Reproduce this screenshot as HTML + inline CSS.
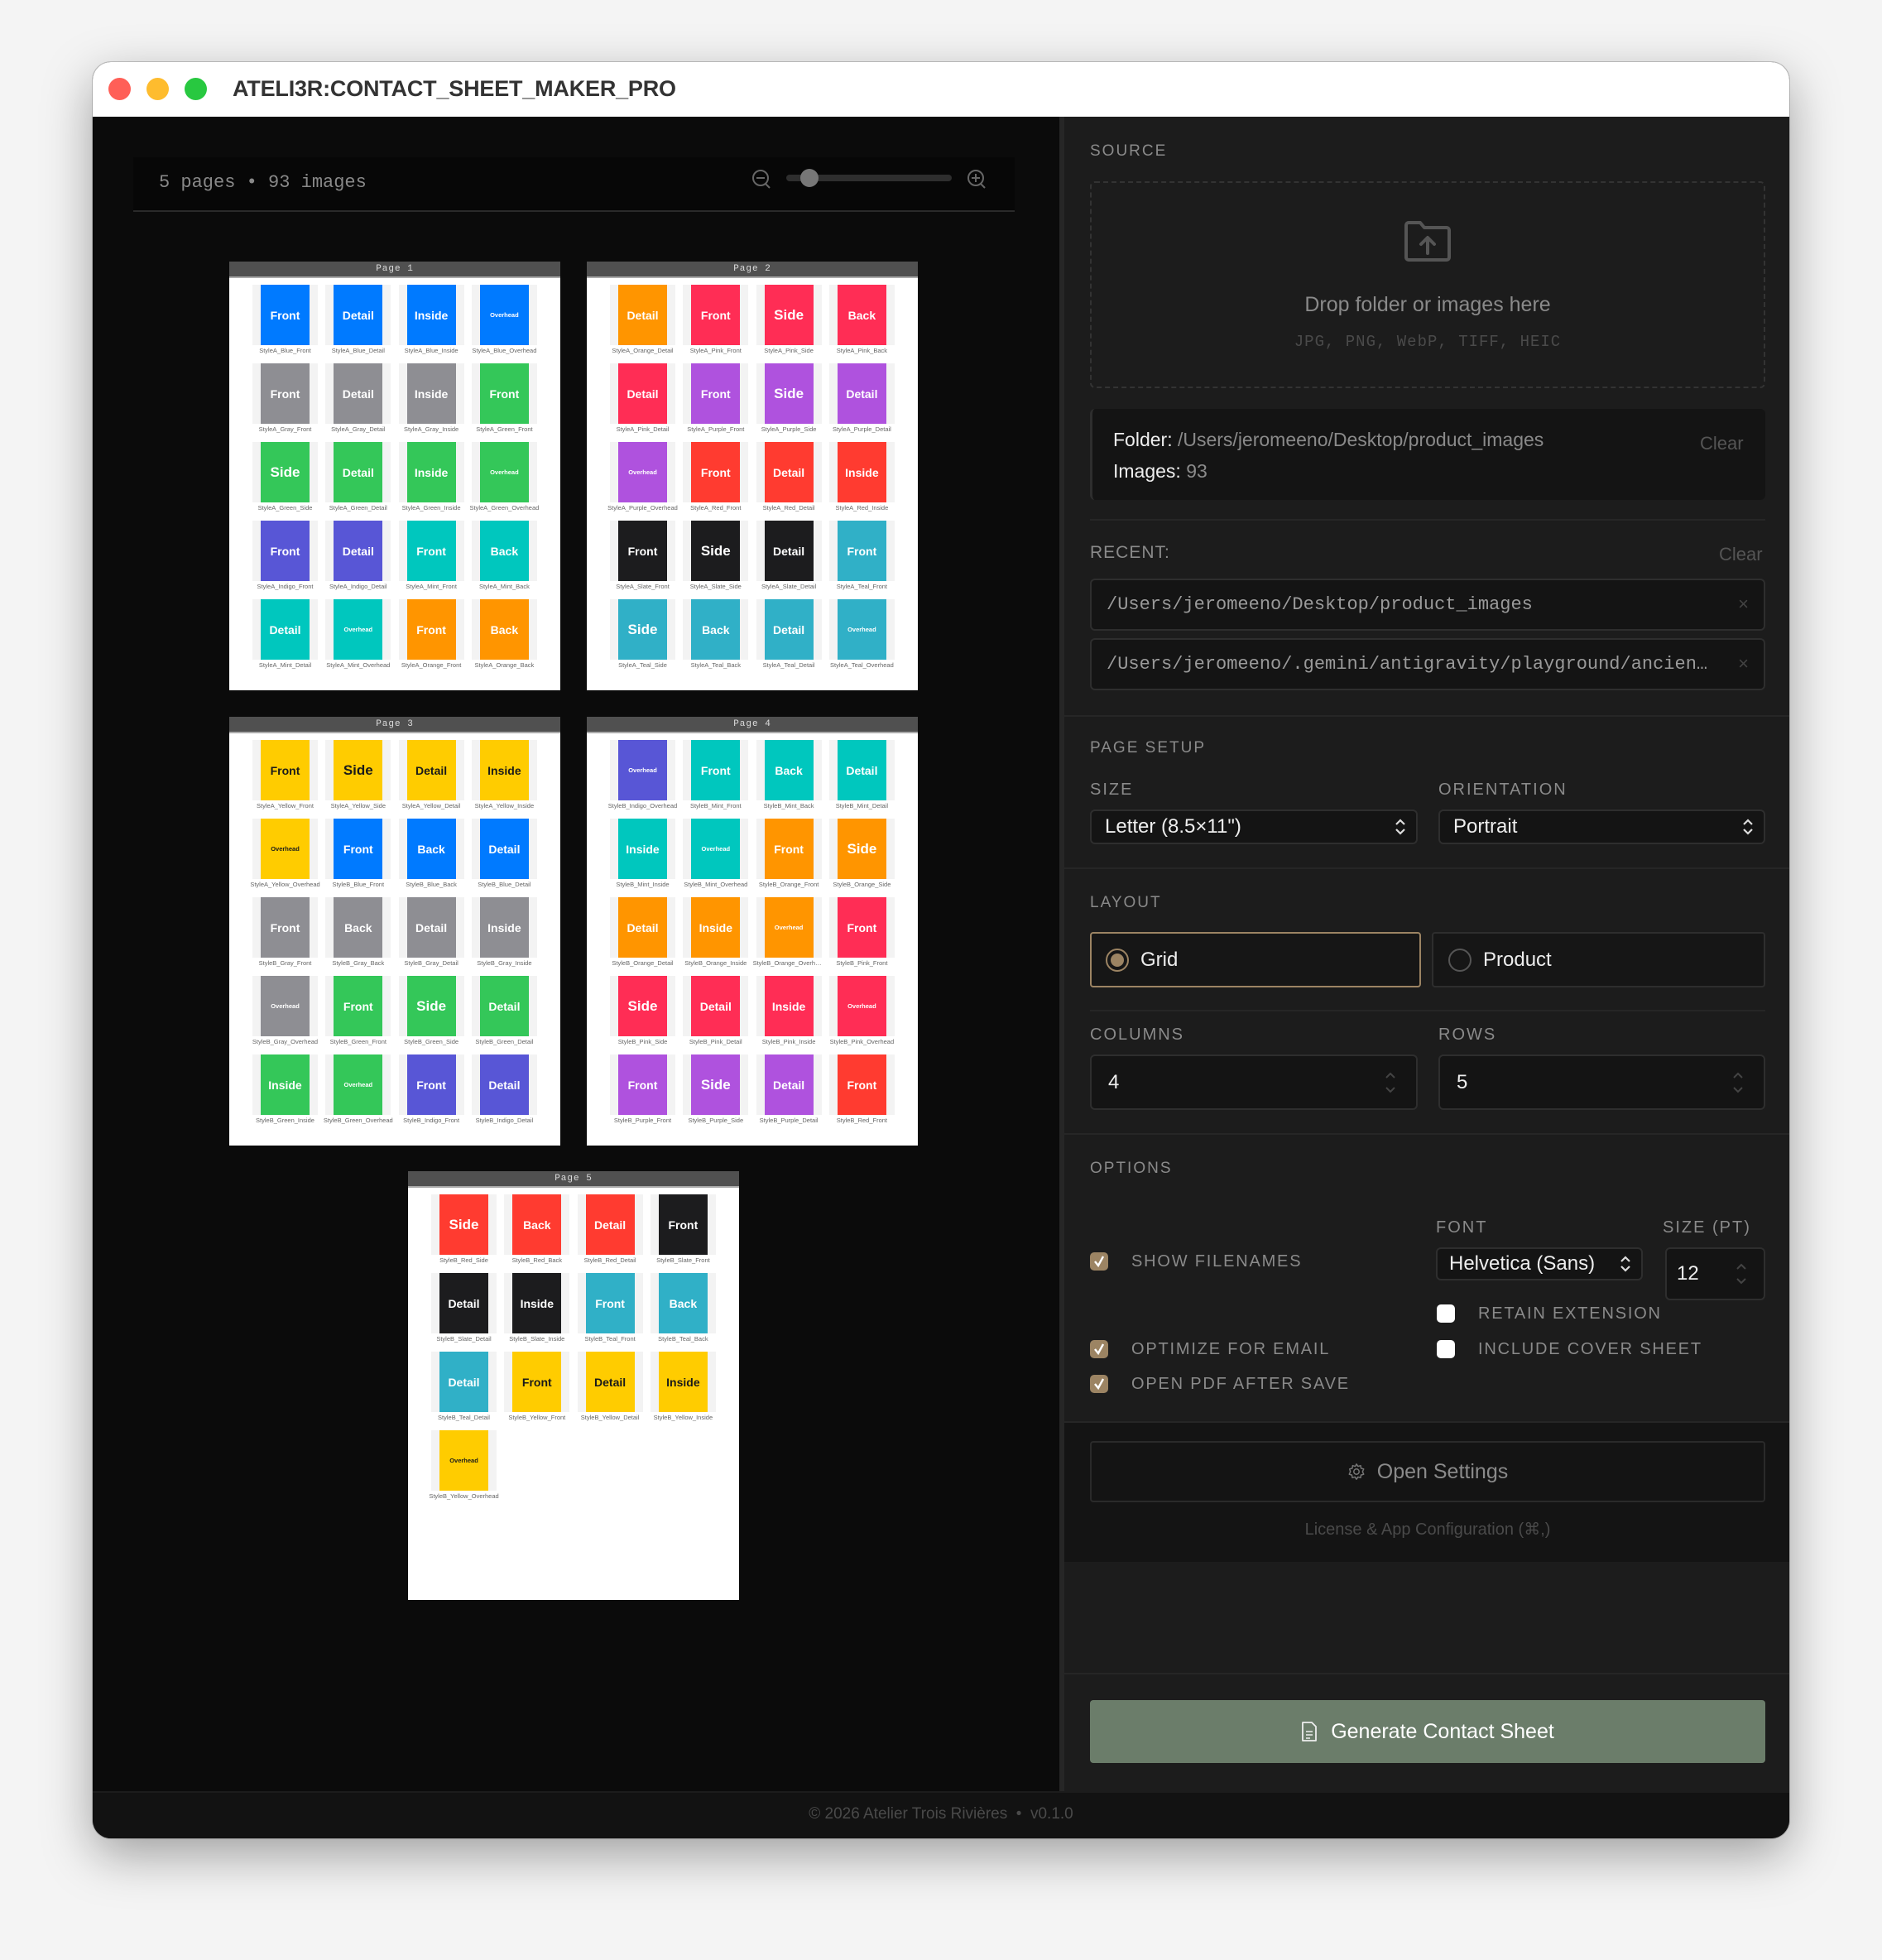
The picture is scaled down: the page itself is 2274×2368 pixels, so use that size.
<!DOCTYPE html>
<html><head><meta charset="utf-8"><style>
*{box-sizing:border-box;margin:0;padding:0}
html,body{width:2274px;height:2368px;overflow:hidden;background:#f4f4f4;font-family:"Liberation Sans",Arial,sans-serif}
.win{position:absolute;left:112px;top:75px;width:2050px;height:2146px;border-radius:22px;overflow:hidden;background:#0b0b0b;box-shadow:0 20px 60px rgba(0,0,0,.35),0 0 0 1px #c8c8c8}
.tb{position:absolute;left:0;top:0;width:100%;height:66px;background:#fff}
.dot{position:absolute;top:19px;width:27px;height:27px;border-radius:50%}
.ttl{position:absolute;left:169px;top:17px;font-weight:bold;font-size:27px;color:#333;letter-spacing:-.2px}
.abs{position:absolute}
.page{position:absolute;width:400px;height:518px;background:#fff}
.ph{height:20px;background:#505050;border-bottom:2px solid #aaa;color:#ddd;font:11px "Liberation Mono",monospace;text-align:center;line-height:19px;letter-spacing:1px}
.g{display:grid;grid-template-columns:repeat(4,79px);column-gap:9.3px;row-gap:22px;padding:8px 0 0 28px}
.c{width:79px;height:73px;background:#f3f3f3;position:relative}
.i{position:absolute;left:10px;top:0;width:59px;height:73px;color:#fff;font-weight:bold;font-size:14px;display:flex;align-items:center;justify-content:center}
.i.s{font-size:17px}.i.o{font-size:7.5px}
.c p{position:absolute;top:75px;left:-4px;width:87px;font-size:7.5px;color:#666;text-align:center;white-space:nowrap;overflow:hidden;text-overflow:ellipsis}
.b{background:#007aff}.gy{background:#8e8e93}.gr{background:#34c759}.in{background:#5856d6}.mi{background:#00c7be}.or{background:#ff9500}.pk{background:#ff2d55}.pu{background:#af52de}.rd{background:#ff3b30}.sl{background:#1c1c1e}.te{background:#30b0c7}.ye{background:#ffcc00;color:#1a1a1a!important}
.rp{position:absolute;left:1168px;top:66px;width:882px;height:2023px;background:#1c1c1c;border-left:6px solid #262626}
.lbl{position:absolute;font-size:19px;letter-spacing:2px;color:#8a8a8a}
.hr{position:absolute;height:2px;background:#262626}
.box{position:absolute;background:#141414;border:2px solid #2e2e2e;border-radius:6px}
.sel{color:#eee;font-size:24px;padding-left:16px;display:flex;align-items:center}
.arr{position:absolute;right:12px;top:50%;transform:translateY(-50%)}
.cb{position:absolute;width:22px;height:22px;border-radius:5px;background:#9c8463}
.cb.w{background:#fff}
.ot{position:absolute;font-size:20px;letter-spacing:1.8px;color:#8a8a8a}
</style></head><body>
<div class="win">
<div class="tb">
<div class="dot" style="left:19px;background:#ff5f57"></div>
<div class="dot" style="left:65px;background:#febc2e"></div>
<div class="dot" style="left:111px;background:#28c840"></div>
<div class="ttl">ATELI3R:CONTACT_SHEET_MAKER_PRO</div>
</div>
<!-- toolbar -->
<div class="abs" style="left:49px;top:115px;width:1065px;height:66px;background:#070707;border-bottom:2px solid #2a2a2a"></div>
<div class="abs" style="left:80px;top:133px;font:22px 'Liberation Mono',monospace;color:#888">5 pages • 93 images</div>
<svg class="abs" style="left:795px;top:126px" width="300" height="40">
<circle cx="12" cy="14" r="9" fill="none" stroke="#666" stroke-width="2"/><line x1="7" y1="14" x2="17" y2="14" stroke="#666" stroke-width="2"/><line x1="18" y1="21" x2="23" y2="26" stroke="#666" stroke-width="2"/>
<rect x="43" y="10" width="200" height="8" rx="4" fill="#2e2e2e"/><circle cx="71" cy="14" r="11" fill="#777"/>
<circle cx="272" cy="14" r="9" fill="none" stroke="#666" stroke-width="2"/><line x1="267" y1="14" x2="277" y2="14" stroke="#666" stroke-width="2"/><line x1="272" y1="9" x2="272" y2="19" stroke="#666" stroke-width="2"/><line x1="278" y1="21" x2="283" y2="26" stroke="#666" stroke-width="2"/>
</svg>

<!-- pages -->
<div class="page" style="left:165px;top:241px"><div class="ph">Page 1</div><div class="g">
<div class="c"><div class="i b">Front</div><p>StyleA_Blue_Front</p></div>
<div class="c"><div class="i b">Detail</div><p>StyleA_Blue_Detail</p></div>
<div class="c"><div class="i b">Inside</div><p>StyleA_Blue_Inside</p></div>
<div class="c"><div class="i b o">Overhead</div><p>StyleA_Blue_Overhead</p></div>
<div class="c"><div class="i gy">Front</div><p>StyleA_Gray_Front</p></div>
<div class="c"><div class="i gy">Detail</div><p>StyleA_Gray_Detail</p></div>
<div class="c"><div class="i gy">Inside</div><p>StyleA_Gray_Inside</p></div>
<div class="c"><div class="i gr">Front</div><p>StyleA_Green_Front</p></div>
<div class="c"><div class="i gr s">Side</div><p>StyleA_Green_Side</p></div>
<div class="c"><div class="i gr">Detail</div><p>StyleA_Green_Detail</p></div>
<div class="c"><div class="i gr">Inside</div><p>StyleA_Green_Inside</p></div>
<div class="c"><div class="i gr o">Overhead</div><p>StyleA_Green_Overhead</p></div>
<div class="c"><div class="i in">Front</div><p>StyleA_Indigo_Front</p></div>
<div class="c"><div class="i in">Detail</div><p>StyleA_Indigo_Detail</p></div>
<div class="c"><div class="i mi">Front</div><p>StyleA_Mint_Front</p></div>
<div class="c"><div class="i mi">Back</div><p>StyleA_Mint_Back</p></div>
<div class="c"><div class="i mi">Detail</div><p>StyleA_Mint_Detail</p></div>
<div class="c"><div class="i mi o">Overhead</div><p>StyleA_Mint_Overhead</p></div>
<div class="c"><div class="i or">Front</div><p>StyleA_Orange_Front</p></div>
<div class="c"><div class="i or">Back</div><p>StyleA_Orange_Back</p></div>
</div></div>

<div class="page" style="left:597px;top:241px"><div class="ph">Page 2</div><div class="g">
<div class="c"><div class="i or">Detail</div><p>StyleA_Orange_Detail</p></div>
<div class="c"><div class="i pk">Front</div><p>StyleA_Pink_Front</p></div>
<div class="c"><div class="i pk s">Side</div><p>StyleA_Pink_Side</p></div>
<div class="c"><div class="i pk">Back</div><p>StyleA_Pink_Back</p></div>
<div class="c"><div class="i pk">Detail</div><p>StyleA_Pink_Detail</p></div>
<div class="c"><div class="i pu">Front</div><p>StyleA_Purple_Front</p></div>
<div class="c"><div class="i pu s">Side</div><p>StyleA_Purple_Side</p></div>
<div class="c"><div class="i pu">Detail</div><p>StyleA_Purple_Detail</p></div>
<div class="c"><div class="i pu o">Overhead</div><p>StyleA_Purple_Overhead</p></div>
<div class="c"><div class="i rd">Front</div><p>StyleA_Red_Front</p></div>
<div class="c"><div class="i rd">Detail</div><p>StyleA_Red_Detail</p></div>
<div class="c"><div class="i rd">Inside</div><p>StyleA_Red_Inside</p></div>
<div class="c"><div class="i sl">Front</div><p>StyleA_Slate_Front</p></div>
<div class="c"><div class="i sl s">Side</div><p>StyleA_Slate_Side</p></div>
<div class="c"><div class="i sl">Detail</div><p>StyleA_Slate_Detail</p></div>
<div class="c"><div class="i te">Front</div><p>StyleA_Teal_Front</p></div>
<div class="c"><div class="i te s">Side</div><p>StyleA_Teal_Side</p></div>
<div class="c"><div class="i te">Back</div><p>StyleA_Teal_Back</p></div>
<div class="c"><div class="i te">Detail</div><p>StyleA_Teal_Detail</p></div>
<div class="c"><div class="i te o">Overhead</div><p>StyleA_Teal_Overhead</p></div>
</div></div>

<div class="page" style="left:165px;top:791px"><div class="ph">Page 3</div><div class="g">
<div class="c"><div class="i ye">Front</div><p>StyleA_Yellow_Front</p></div>
<div class="c"><div class="i ye s">Side</div><p>StyleA_Yellow_Side</p></div>
<div class="c"><div class="i ye">Detail</div><p>StyleA_Yellow_Detail</p></div>
<div class="c"><div class="i ye">Inside</div><p>StyleA_Yellow_Inside</p></div>
<div class="c"><div class="i ye o">Overhead</div><p>StyleA_Yellow_Overhead</p></div>
<div class="c"><div class="i b">Front</div><p>StyleB_Blue_Front</p></div>
<div class="c"><div class="i b">Back</div><p>StyleB_Blue_Back</p></div>
<div class="c"><div class="i b">Detail</div><p>StyleB_Blue_Detail</p></div>
<div class="c"><div class="i gy">Front</div><p>StyleB_Gray_Front</p></div>
<div class="c"><div class="i gy">Back</div><p>StyleB_Gray_Back</p></div>
<div class="c"><div class="i gy">Detail</div><p>StyleB_Gray_Detail</p></div>
<div class="c"><div class="i gy">Inside</div><p>StyleB_Gray_Inside</p></div>
<div class="c"><div class="i gy o">Overhead</div><p>StyleB_Gray_Overhead</p></div>
<div class="c"><div class="i gr">Front</div><p>StyleB_Green_Front</p></div>
<div class="c"><div class="i gr s">Side</div><p>StyleB_Green_Side</p></div>
<div class="c"><div class="i gr">Detail</div><p>StyleB_Green_Detail</p></div>
<div class="c"><div class="i gr">Inside</div><p>StyleB_Green_Inside</p></div>
<div class="c"><div class="i gr o">Overhead</div><p>StyleB_Green_Overhead</p></div>
<div class="c"><div class="i in">Front</div><p>StyleB_Indigo_Front</p></div>
<div class="c"><div class="i in">Detail</div><p>StyleB_Indigo_Detail</p></div>
</div></div>

<div class="page" style="left:597px;top:791px"><div class="ph">Page 4</div><div class="g">
<div class="c"><div class="i in o">Overhead</div><p>StyleB_Indigo_Overhead</p></div>
<div class="c"><div class="i mi">Front</div><p>StyleB_Mint_Front</p></div>
<div class="c"><div class="i mi">Back</div><p>StyleB_Mint_Back</p></div>
<div class="c"><div class="i mi">Detail</div><p>StyleB_Mint_Detail</p></div>
<div class="c"><div class="i mi">Inside</div><p>StyleB_Mint_Inside</p></div>
<div class="c"><div class="i mi o">Overhead</div><p>StyleB_Mint_Overhead</p></div>
<div class="c"><div class="i or">Front</div><p>StyleB_Orange_Front</p></div>
<div class="c"><div class="i or s">Side</div><p>StyleB_Orange_Side</p></div>
<div class="c"><div class="i or">Detail</div><p>StyleB_Orange_Detail</p></div>
<div class="c"><div class="i or">Inside</div><p>StyleB_Orange_Inside</p></div>
<div class="c"><div class="i or o">Overhead</div><p>StyleB_Orange_Overhead</p></div>
<div class="c"><div class="i pk">Front</div><p>StyleB_Pink_Front</p></div>
<div class="c"><div class="i pk s">Side</div><p>StyleB_Pink_Side</p></div>
<div class="c"><div class="i pk">Detail</div><p>StyleB_Pink_Detail</p></div>
<div class="c"><div class="i pk">Inside</div><p>StyleB_Pink_Inside</p></div>
<div class="c"><div class="i pk o">Overhead</div><p>StyleB_Pink_Overhead</p></div>
<div class="c"><div class="i pu">Front</div><p>StyleB_Purple_Front</p></div>
<div class="c"><div class="i pu s">Side</div><p>StyleB_Purple_Side</p></div>
<div class="c"><div class="i pu">Detail</div><p>StyleB_Purple_Detail</p></div>
<div class="c"><div class="i rd">Front</div><p>StyleB_Red_Front</p></div>
</div></div>

<div class="page" style="left:381px;top:1340px"><div class="ph">Page 5</div><div class="g">
<div class="c"><div class="i rd s">Side</div><p>StyleB_Red_Side</p></div>
<div class="c"><div class="i rd">Back</div><p>StyleB_Red_Back</p></div>
<div class="c"><div class="i rd">Detail</div><p>StyleB_Red_Detail</p></div>
<div class="c"><div class="i sl">Front</div><p>StyleB_Slate_Front</p></div>
<div class="c"><div class="i sl">Detail</div><p>StyleB_Slate_Detail</p></div>
<div class="c"><div class="i sl">Inside</div><p>StyleB_Slate_Inside</p></div>
<div class="c"><div class="i te">Front</div><p>StyleB_Teal_Front</p></div>
<div class="c"><div class="i te">Back</div><p>StyleB_Teal_Back</p></div>
<div class="c"><div class="i te">Detail</div><p>StyleB_Teal_Detail</p></div>
<div class="c"><div class="i ye">Front</div><p>StyleB_Yellow_Front</p></div>
<div class="c"><div class="i ye">Detail</div><p>StyleB_Yellow_Detail</p></div>
<div class="c"><div class="i ye">Inside</div><p>StyleB_Yellow_Inside</p></div>
<div class="c"><div class="i ye o">Overhead</div><p>StyleB_Yellow_Overhead</p></div>
</div></div>

<!-- right panel -->
<div class="rp">
<div class="lbl" style="left:31px;top:31px">SOURCE</div>
<div class="abs" style="left:31px;top:78px;width:816px;height:250px;border:2px dashed #333;border-radius:6px"></div>
<svg class="abs" style="left:409px;top:123px" width="60" height="56" viewBox="0 0 60 56"><path d="M4 8 a3 3 0 0 1 3-3 h14 l5 6 h27 a3 3 0 0 1 3 3 v33 a3 3 0 0 1-3 3 h-46 a3 3 0 0 1-3-3z" fill="none" stroke="#555" stroke-width="4" stroke-linejoin="round"/><path d="M30 42 V24 M22 31 l8-8 8 8" fill="none" stroke="#555" stroke-width="4" stroke-linecap="round" stroke-linejoin="round"/></svg>
<div class="abs" style="left:31px;top:213px;width:816px;text-align:center;font-size:25px;color:#8a8a8a">Drop folder or images here</div>
<div class="abs" style="left:31px;top:261px;width:816px;text-align:center;font:19px 'Liberation Mono',monospace;color:#4a4a4a;letter-spacing:1px">JPG, PNG, WebP, TIFF, HEIC</div>
<div class="abs" style="left:31px;top:353px;width:816px;height:110px;background:#141414;border-radius:6px;border-left:3px solid #2e2e2e"></div>
<div class="abs" style="left:59px;top:377px;font-size:23px;color:#eee">Folder: <span style="color:#8a8a8a">/Users/jeromeeno/Desktop/product_images</span></div>
<div class="abs" style="left:59px;top:415px;font-size:23px;color:#eee">Images: <span style="color:#8a8a8a">93</span></div>
<div class="abs" style="left:768px;top:382px;font-size:22px;color:#555">Clear</div>
<div class="hr" style="left:31px;top:486px;width:816px"></div>
<div class="lbl" style="left:31px;top:515px;font-size:21px;letter-spacing:1px">RECENT:</div>
<div class="abs" style="left:791px;top:516px;font-size:22px;color:#555">Clear</div>
<div class="box" style="left:31px;top:558px;width:816px;height:63px"><div class="abs" style="left:18px;top:17px;font:22px 'Liberation Mono',monospace;color:#9a9a9a">/Users/jeromeeno/Desktop/product_images</div><div class="abs" style="right:18px;top:16px;font-size:22px;color:#444">×</div></div>
<div class="box" style="left:31px;top:630px;width:816px;height:63px"><div class="abs" style="left:18px;top:17px;font:22px 'Liberation Mono',monospace;color:#9a9a9a">/Users/jeromeeno/.gemini/antigravity/playground/ancien…</div><div class="abs" style="right:18px;top:16px;font-size:22px;color:#444">×</div></div>
<div class="hr" style="left:0;top:723px;width:882px"></div>
<div class="lbl" style="left:31px;top:752px">PAGE SETUP</div>
<div class="lbl" style="left:31px;top:802px;font-size:20px">SIZE</div>
<div class="lbl" style="left:452px;top:802px;font-size:20px">ORIENTATION</div>
<div class="box sel" style="left:31px;top:837px;width:396px;height:42px">Letter (8.5×11")<svg class="arr" width="14" height="24"><path d="M2 9 7 4 12 9M2 15 7 20 12 15" fill="none" stroke="#ddd" stroke-width="2.2"/></svg></div>
<div class="box sel" style="left:452px;top:837px;width:395px;height:42px">Portrait<svg class="arr" width="14" height="24"><path d="M2 9 7 4 12 9M2 15 7 20 12 15" fill="none" stroke="#ddd" stroke-width="2.2"/></svg></div>
<div class="hr" style="left:0;top:907px;width:882px"></div>
<div class="lbl" style="left:31px;top:939px">LAYOUT</div>
<div class="abs" style="left:31px;top:985px;width:400px;height:67px;border:2px solid #9c8463;border-radius:4px;background:#161616"></div>
<div class="abs" style="left:50px;top:1005px;width:28px;height:28px;border-radius:50%;border:2px solid #9c8463"><div style="margin:4px;width:16px;height:16px;border-radius:50%;background:#9c8463"></div></div>
<div class="abs" style="left:92px;top:1005px;font-size:24px;color:#eee">Grid</div>
<div class="abs" style="left:444px;top:985px;width:403px;height:67px;border:2px solid #2e2e2e;border-radius:4px;background:#161616"></div>
<div class="abs" style="left:464px;top:1005px;width:28px;height:28px;border-radius:50%;border:2px solid #555"></div>
<div class="abs" style="left:506px;top:1005px;font-size:24px;color:#eee">Product</div>
<div class="hr" style="left:31px;top:1079px;width:816px"></div>
<div class="lbl" style="left:31px;top:1098px;font-size:20px">COLUMNS</div>
<div class="lbl" style="left:452px;top:1098px;font-size:20px">ROWS</div>
<div class="box sel" style="left:31px;top:1133px;width:396px;height:67px;background:#141414;padding-left:20px">4<svg class="arr" style="right:24px" width="14" height="30"><path d="M2 9 7 4 12 9M2 21 7 26 12 21" fill="none" stroke="#444" stroke-width="2"/></svg></div>
<div class="box sel" style="left:452px;top:1133px;width:395px;height:67px;background:#141414;padding-left:20px">5<svg class="arr" style="right:24px" width="14" height="30"><path d="M2 9 7 4 12 9M2 21 7 26 12 21" fill="none" stroke="#444" stroke-width="2"/></svg></div>
<div class="hr" style="left:0;top:1228px;width:882px"></div>
<div class="lbl" style="left:31px;top:1260px">OPTIONS</div>
<div class="lbl" style="left:449px;top:1331px;font-size:20px">FONT</div>
<div class="lbl" style="left:723px;top:1331px;font-size:20px">SIZE (PT)</div>
<div class="cb" style="left:31px;top:1372px"><svg width="22" height="22"><path d="M6 11 10 16 16 5" fill="none" stroke="#fff" stroke-width="2.4"/></svg></div>
<div class="ot" style="left:81px;top:1372px">SHOW FILENAMES</div>
<div class="box sel" style="left:449px;top:1366px;width:250px;height:40px;padding-left:14px">Helvetica (Sans)<svg class="arr" width="14" height="24"><path d="M2 9 7 4 12 9M2 15 7 20 12 15" fill="none" stroke="#ddd" stroke-width="2.2"/></svg></div>
<div class="box sel" style="left:726px;top:1366px;width:121px;height:64px;padding-left:12px">12<svg class="arr" style="right:20px" width="14" height="30"><path d="M2 9 7 4 12 9M2 21 7 26 12 21" fill="none" stroke="#444" stroke-width="2"/></svg></div>
<div class="cb w" style="left:450px;top:1435px"></div>
<div class="ot" style="left:500px;top:1435px">RETAIN EXTENSION</div>
<div class="cb" style="left:31px;top:1478px"><svg width="22" height="22"><path d="M6 11 10 16 16 5" fill="none" stroke="#fff" stroke-width="2.4"/></svg></div>
<div class="ot" style="left:81px;top:1478px">OPTIMIZE FOR EMAIL</div>
<div class="cb w" style="left:450px;top:1478px"></div>
<div class="ot" style="left:500px;top:1478px">INCLUDE COVER SHEET</div>
<div class="cb" style="left:31px;top:1520px"><svg width="22" height="22"><path d="M6 11 10 16 16 5" fill="none" stroke="#fff" stroke-width="2.4"/></svg></div>
<div class="ot" style="left:81px;top:1520px">OPEN PDF AFTER SAVE</div>
<div class="abs" style="left:0;top:1576px;width:882px;height:170px;background:#141414;border-top:2px solid #262626"></div>
<div class="abs" style="left:31px;top:1600px;width:816px;height:74px;border:2px solid #2a2a2a;border-radius:4px;display:flex;align-items:center;justify-content:center;font-size:25px;color:#8a8a8a"><svg width="22" height="22" viewBox="0 0 24 24" style="margin-right:14px"><circle cx="12" cy="12" r="3.5" fill="none" stroke="#777" stroke-width="1.6"/><path d="M12 2l2 3 3.5-1 .5 3.5 3.5 1-1.5 3.5 1.5 3.5-3.5 1-.5 3.5-3.5-1-2 3-2-3-3.5 1-.5-3.5-3.5-1 1.5-3.5L3 8.5l3.5-1L7 4l3.5 1z" fill="none" stroke="#777" stroke-width="1.6" stroke-linejoin="round"/></svg>Open Settings</div>
<div class="abs" style="left:31px;top:1694px;width:816px;text-align:center;font-size:20px;color:#4a4a4a">License &amp; App Configuration (⌘,)</div>
<div class="hr" style="left:0;top:1880px;width:882px"></div>
<div class="abs" style="left:31px;top:1913px;width:816px;height:76px;background:#6b7d6a;border-radius:4px;display:flex;align-items:center;justify-content:center;font-size:25px;color:#fff"><svg width="20" height="26" viewBox="0 0 20 26" style="margin-right:16px"><path d="M2 2h11l5 5v17H2z" fill="none" stroke="#eee" stroke-width="1.8" stroke-linejoin="round"/><path d="M6 13h8M6 17h8M6 21h5" stroke="#eee" stroke-width="1.6"/></svg>Generate Contact Sheet</div>
</div>
<!-- footer -->
<div class="abs" style="left:0;top:2089px;width:2050px;height:57px;background:#121212;border-top:2px solid #1c1c1c"></div>
<div class="abs" style="left:0;top:2106px;width:2050px;text-align:center;font-size:19px;color:#4a4a4a">© 2026 Atelier Trois Rivières &nbsp;•&nbsp; v0.1.0</div>
</div>
</body></html>
